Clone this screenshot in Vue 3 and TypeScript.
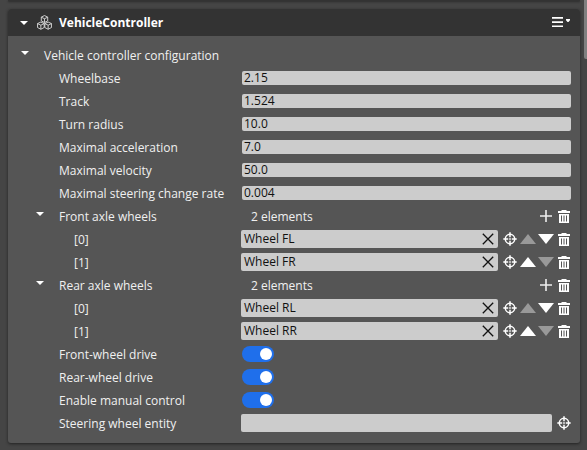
<script setup lang="ts">
interface Row {
  kind: 'group' | 'value' | 'list' | 'item' | 'toggle' | 'entity'
  label: string
  value?: string
  first?: boolean
}

const rows: Row[] = [
  { kind: 'group', label: 'Vehicle controller configuration' },
  { kind: 'value', label: 'Wheelbase', value: '2.15' },
  { kind: 'value', label: 'Track', value: '1.524' },
  { kind: 'value', label: 'Turn radius', value: '10.0' },
  { kind: 'value', label: 'Maximal acceleration', value: '7.0' },
  { kind: 'value', label: 'Maximal velocity', value: '50.0' },
  { kind: 'value', label: 'Maximal steering change rate', value: '0.004' },
  { kind: 'list', label: 'Front axle wheels', value: '2 elements' },
  { kind: 'item', label: '[0]', value: 'Wheel FL', first: true },
  { kind: 'item', label: '[1]', value: 'Wheel FR' },
  { kind: 'list', label: 'Rear axle wheels', value: '2 elements' },
  { kind: 'item', label: '[0]', value: 'Wheel RL', first: true },
  { kind: 'item', label: '[1]', value: 'Wheel RR' },
  { kind: 'toggle', label: 'Front-wheel drive' },
  { kind: 'toggle', label: 'Rear-wheel drive' },
  { kind: 'toggle', label: 'Enable manual control' },
  { kind: 'entity', label: 'Steering wheel entity' },
]
</script>

<template>
  <div class="page">
    <div class="previous"></div>
    <section class="panel">
      <header class="head">
        <svg class="arrow" viewBox="0 0 8 4"><path d="M0 0H8L4 4Z" /></svg>
        <svg class="cubes" viewBox="0 0 14 14">
          <path d="M7 .5 10 2v3.500L7 7 4 5.500V2ZM4 2l3 1.500L10 2M7 3.500V7M3.600 6.600 6.700 8v3.700L3.600 13.300.5 11.700V8ZM.5 8l3.100 1.500L6.700 8M3.600 9.500v3.800M10.400 6.600 13.500 8v3.700l-3.100 1.600-3.100-1.600V8ZM7.300 8l3.100 1.500L13.500 8M10.400 9.500v3.800" />
        </svg>
        <h1>VehicleController</h1>
        <svg class="menu" viewBox="0 0 19 11">
          <path d="M0 0H11V1.700H0ZM0 4.200H11V5.900H0ZM0 8.400H11V10H0ZM14 2H18V3.200L16.500 5H15.500L14 3.200Z" />
        </svg>
      </header>
      <div class="body">
        <div v-for="(row, i) in rows" :key="i" class="row" :class="row.kind">
          <div class="label">
            <svg v-if="row.kind === 'group' || row.kind === 'list'" class="arrow" viewBox="0 0 8 4"><path d="M0 0H8L4 4Z" /></svg>
            <span>{{ row.label }}</span>
          </div>
          <div v-if="row.kind === 'value'" class="field">{{ row.value }}</div>
          <template v-else-if="row.kind === 'list'">
            <span class="count">{{ row.value }}</span>
            <svg class="plus" viewBox="0 0 12 12"><path d="M6 0V12M0 6H12" /></svg>
          </template>
          <div v-else-if="row.kind === 'toggle'" class="switch"><i></i></div>
          <div v-else-if="row.kind === 'item' || row.kind === 'entity'" class="field object">
            <span>{{ row.value }}</span>
            <svg v-if="row.kind === 'item'" class="clear" viewBox="0 0 12 12"><path d="M.8.8 11.200 11.200M11.200.8.8 11.200" /></svg>
          </div>
          <svg v-if="row.kind === 'item' || row.kind === 'entity'" class="target" viewBox="0 0 14 14">
            <circle cx="7" cy="7" r="4.700" />
            <path d="M7 .3V5.200M7 8.800V13.700M.3 7H5.200M8.800 7H13.700" />
            <path class="dot" d="M6.200 6.200H7.800V7.800H6.200Z" />
          </svg>
          <template v-if="row.kind === 'item'">
            <svg class="move" :class="{ dim: row.first }" viewBox="0 0 16 10"><path d="M8 0 16 10H0Z" /></svg>
            <svg class="move down" :class="{ dim: !row.first }" viewBox="0 0 16 10"><path d="M0 0H16L8 10Z" /></svg>
          </template>
          <svg v-if="row.kind === 'item' || row.kind === 'list'" class="trash" viewBox="0 0 12 13">
            <path fill-rule="evenodd" d="M3.500 0H8.500V1H12V3H0V1H3.500ZM1 4H11V13H1ZM3 5.500V11.500H4V5.500ZM5.500 5.500V11.500H6.500V5.500ZM8 5.500V11.500H9V5.500Z" />
          </svg>
        </div>
      </div>
    </section>
    <div class="scrollbar"></div>
  </div>
</template>

<style>
body {
  background: #454545;
}
</style>

<style scoped>
.page {
  position: relative;
  box-sizing: border-box;
  width: 587px;
  height: 450px;
  padding-left: 8px;
  overflow: hidden;
  background: #454545;
  color: #f0f0f0;
  font: 12px/18px "Open Sans", "Noto Sans", sans-serif;
}
svg {
  display: block;
  flex: none;
  fill: #fff;
}
.previous {
  width: 572px;
  height: 1px;
  margin-bottom: 8px;
  background: #333;
  box-shadow: 0 1px 2px #222;
}
.panel {
  width: 572px;
  height: 434px;
  border-radius: 3px;
  background: #555;
  box-shadow: 0 1px 3px #222;
}
.head {
  box-sizing: border-box;
  display: flex;
  align-items: center;
  height: 27px;
  padding: 0 9px 0 12px;
  border-radius: 3px 3px 0 0;
  background: #333;
}
.arrow {
  width: 8px;
  height: 4px;
}
.cubes {
  width: 15px;
  height: 15px;
  margin: 0 0 1px 8.500px;
  fill: none;
  stroke: #e4e4e4;
  stroke-width: 0.8;
}
h1 {
  margin: 0 auto 0 7.500px;
  color: #fff;
  font-size: 12px;
  font-weight: 700;
}
.menu {
  width: 19px;
  height: 11px;
}
.body {
  padding-top: 8px;
}
.row {
  box-sizing: border-box;
  display: flex;
  align-items: center;
  height: 23px;
  padding: 0 10px 1px 51px;
}
.label {
  display: flex;
  width: 183px;
  flex: none;
  padding-top: 2px;
  white-space: nowrap;
}
.group {
  padding-left: 13px;
}
.list {
  padding-left: 28px;
}
.list .label {
  width: 215px;
}
.label .arrow {
  margin: 4px 15px 0 0;
}
.item {
  padding-left: 66px;
}
.item .label {
  width: 167px;
}
.entity .label {
  width: 182px;
}
.field {
  box-sizing: border-box;
  flex: 1;
  height: 14px;
  margin-right: -1px;
  padding-left: 2px;
  border-radius: 2px;
  background: #ccc;
  color: #111;
  line-height: 14px;
}
.object {
  display: flex;
  align-items: center;
  justify-content: space-between;
  height: 18px;
  margin-right: 5px;
  padding: 0 4px 0 3px;
}
.clear {
  width: 12px;
  height: 12px;
  fill: none;
  stroke: #111;
  stroke-width: 1.300;
}
.target {
  width: 14px;
  height: 14px;
  fill: none;
  stroke: #fff;
  stroke-width: 1.500;
}
.target .dot {
  fill: #fff;
  stroke: none;
}
.entity .target {
  margin-right: -1px;
}
.move {
  width: 16px;
  height: 10px;
  margin-left: 3px;
}
.move.down {
  margin-left: 2px;
}
.dim {
  fill: #999;
}
.trash {
  width: 12px;
  height: 13px;
  margin: 1px 0 0 4px;
}
.count {
  margin-right: auto;
  padding-top: 2px;
}
.plus {
  width: 12px;
  height: 12px;
  margin-right: 2px;
  fill: none;
  stroke: #eee;
  stroke-width: 1.600;
}
.switch {
  box-sizing: border-box;
  display: flex;
  justify-content: flex-end;
  width: 32px;
  height: 16px;
  padding: 2px;
  border-radius: 8px;
  background: #1f6feb;
}
.switch i {
  width: 12px;
  height: 12px;
  border-radius: 50%;
  background: #fff;
}
.scrollbar {
  position: absolute;
  top: 0;
  right: 0;
  width: 3px;
  height: 59px;
  border-radius: 0 0 0 2px;
  background: #808080;
}
</style>
